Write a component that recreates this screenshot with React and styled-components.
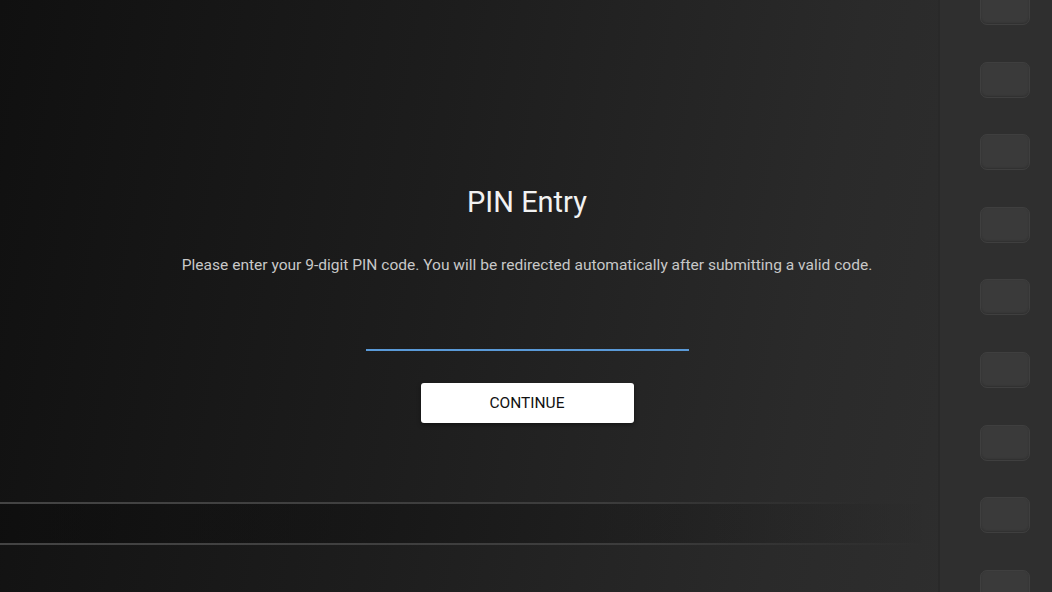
import { useState } from "react";
import styled, { createGlobalStyle } from "styled-components";

const GlobalStyle = createGlobalStyle`
  html, body {
    margin: 0;
    padding: 0;
    background: #1c1c1c;
  }
  * {
    box-sizing: border-box;
  }
`;

const HOLES = 9;

export default function App() {
  const [pin, setPin] = useState("");

  return (
    <>
      <GlobalStyle />
      <Screen>
        <Main>
          <Content>
            <Title>PIN Entry</Title>
            <Hint>
              Please enter your 9-digit PIN code. You will be redirected
              automatically after submitting a valid code.
            </Hint>
            <PinInput
              value={pin}
              maxLength={9}
              inputMode="numeric"
              onChange={(e) => setPin(e.target.value.replace(/\D/g, ""))}
            />
            <ContinueButton>CONTINUE</ContinueButton>
          </Content>
          <Band>
            <Rule $width="865px" />
            <BandFill />
            <Rule $width="920px" />
          </Band>
          <Bottom />
        </Main>
        <FilmStrip>
          <Holes>
            {Array.from({ length: HOLES }).map((_, i) => (
              <Hole key={i} />
            ))}
          </Holes>
        </FilmStrip>
      </Screen>
    </>
  );
}

const Screen = styled.div`
  display: flex;
  width: 100vw;
  height: 100vh;
  overflow: hidden;
  font-family: Roboto, "Liberation Sans", sans-serif;
  background: linear-gradient(100deg, #101010 0%, #1d1d1d 40%, #2a2a2a 75%, #303030 100%);
`;

const Main = styled.div`
  flex: 1;
  display: flex;
  flex-direction: column;
`;

const Content = styled.div`
  display: flex;
  flex-direction: column;
  align-items: center;
  padding-top: 185px;
  padding-left: 116px;
  height: 502px;
`;

const Title = styled.h1`
  margin: 0;
  font-size: 29px;
  line-height: 34px;
  font-weight: 400;
  color: #f2f2f2;
`;

const Hint = styled.p`
  margin: 36px 0 0;
  font-size: 15.55px;
  line-height: 20px;
  color: #c8c8c8;
  white-space: nowrap;
`;

const PinInput = styled.input`
  margin-top: 36px;
  width: 323px;
  height: 40px;
  background: transparent;
  border: none;
  border-bottom: 2px solid #5a9ad8;
  outline: none;
  color: #eee;
  font-family: inherit;
  font-size: 20px;
  text-align: center;
  letter-spacing: 4px;
`;

const ContinueButton = styled.button`
  margin-top: 32px;
  width: 213px;
  height: 40px;
  border: none;
  border-radius: 3px;
  background: #fff;
  color: #111;
  font-family: inherit;
  font-size: 15.5px;
  font-weight: 400;
  box-shadow: 0 2px 4px rgba(0, 0, 0, 0.4);
  cursor: pointer;
`;

const Band = styled.div`
  display: flex;
  flex-direction: column;
`;

const Rule = styled.div`
  width: ${(p) => p.$width};
  height: 2px;
  background: linear-gradient(90deg, #444 0%, #3c3c3c 70%, rgba(60, 60, 60, 0) 100%);
`;

const BandFill = styled.div`
  height: 39px;
  background: linear-gradient(90deg, rgba(10, 10, 10, 0.45) 0%, rgba(10, 10, 10, 0.2) 70%, rgba(10, 10, 10, 0) 100%);
`;

const Bottom = styled.div`
  flex: 1;
`;

const FilmStrip = styled.div`
  width: 114px;
  flex-shrink: 0;
  background: #2f2f2f;
  border-left: 2px solid #292929;
  display: flex;
  justify-content: flex-end;
  padding-right: 22px;
`;

const Holes = styled.div`
  display: flex;
  flex-direction: column;
  gap: 36.6px;
  margin-top: -11px;
`;

const Hole = styled.div`
  width: 50px;
  height: 36px;
  flex-shrink: 0;
  border-radius: 7px;
  background: #3a3a3a;
  border: 1px solid #3f3f3f;
  box-shadow: inset 0 -1px 2px rgba(0, 0, 0, 0.2);
`;
